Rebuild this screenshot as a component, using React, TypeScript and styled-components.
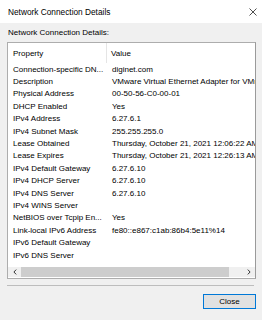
import React from "react";
import styled, { createGlobalStyle } from "styled-components";

const Global = createGlobalStyle`
  html, body { margin: 0; padding: 0; }
  body {
    width: 262px;
    height: 320px;
    overflow: hidden;
    background: #f0f0f0;
    font-family: "Liberation Sans", Arial, sans-serif;
    color: #000;
  }
`;

const Window = styled.div`
  width: 262px;
  height: 320px;
  display: flex;
  flex-direction: column;
  background: #f0f0f0;
`;

const TitleBar = styled.div`
  height: 23px;
  background: #ffffff;
  display: flex;
  align-items: center;
  justify-content: space-between;
  padding: 0 5px 0 8px;
  font-size: 8.3px;
  flex: none;
`;

const CloseX = styled.svg`
  width: 8px;
  height: 8px;
  margin-top: 1px;
`;

const Body = styled.div`
  display: flex;
  flex-direction: column;
  padding: 4px 6px 0 7px;
`;

const Label = styled.div`
  font-size: 8px;
  line-height: 12px;
  padding-left: 1px;
`;

const ListBox = styled.div`
  margin-top: 3px;
  height: 235px;
  border: 1px solid #adadad;
  border-right-color: #9a9a9a;
  background: #ffffff;
  display: flex;
  flex-direction: column;
  overflow: hidden;
`;

const HeaderRow = styled.div`
  height: 20px;
  display: flex;
  flex: none;
  font-size: 8px;
`;

const HeaderCell = styled.div<{ $w?: number }>`
  ${(p) => (p.$w ? `width: ${p.$w}px; flex: none;` : "flex: 1;")}
  display: flex;
  align-items: center;
  padding-left: ${(p) => (p.$w ? 5 : 4)}px;
  padding-top: 1px;
  box-sizing: border-box;
  border-right: ${(p) => (p.$w ? "1px solid #e5e5e5" : "none")};
`;

const Rows = styled.div`
  flex: 1;
  display: flex;
  flex-direction: column;
`;

const Row = styled.div`
  height: 12.4px;
  display: flex;
  align-items: center;
  font-size: 8px;
  white-space: nowrap;
`;

const PropCell = styled.div`
  width: 99px;
  flex: none;
  padding-left: 5px;
  box-sizing: border-box;
  overflow: hidden;
`;

const ValueCell = styled.div`
  flex: 1;
  padding-left: 5px;
  overflow: hidden;
`;

const HScroll = styled.div`
  height: 10px;
  flex: none;
  display: flex;
  background: #f0f0f0;
  margin-bottom: 1px;
`;

const ScrollBtn = styled.div`
  width: 13px;
  flex: none;
  display: flex;
  align-items: center;
  justify-content: center;
`;

const Thumb = styled.div`
  background: #cdcdcd;
  flex: none;
`;

const Track = styled.div`
  flex: 1;
`;

const Separator = styled.div`
  margin-top: 6px;
  height: 1px;
  background: #bdbdbd;
  margin-right: 2px;
`;

const Footer = styled.div`
  display: flex;
  justify-content: flex-end;
  margin-top: 8px;
`;

const Button = styled.button`
  width: 53px;
  height: 15px;
  border: 1px solid #0078d7;
  background: #e1e1e1;
  font-family: "Liberation Sans", Arial, sans-serif;
  font-size: 8px;
  color: #000;
  padding: 0;
  margin: 0;
  display: flex;
  align-items: center;
  justify-content: center;
`;

const rows: [string, string][] = [
  ["Connection-specific DN...", "diginet.com"],
  ["Description", "VMware Virtual Ethernet Adapter for VMnet8"],
  ["Physical Address", "00-50-56-C0-00-01"],
  ["DHCP Enabled", "Yes"],
  ["IPv4 Address", "6.27.6.1"],
  ["IPv4 Subnet Mask", "255.255.255.0"],
  ["Lease Obtained", "Thursday, October 21, 2021 12:06:22 AM"],
  ["Lease Expires", "Thursday, October 21, 2021 12:26:13 AM"],
  ["IPv4 Default Gateway", "6.27.6.10"],
  ["IPv4 DHCP Server", "6.27.6.10"],
  ["IPv4 DNS Server", "6.27.6.10"],
  ["IPv4 WINS Server", ""],
  ["NetBIOS over Tcpip En...", "Yes"],
  ["Link-local IPv6 Address", "fe80::e867:c1ab:86b4:5e11%14"],
  ["IPv6 Default Gateway", ""],
  ["IPv6 DNS Server", ""],
];

export default function App() {
  return (
    <>
      <Global />
      <Window>
        <TitleBar>
          <span>Network Connection Details</span>
          <CloseX viewBox="0 0 8 8">
            <path d="M0.5 0.5 L7.5 7.5 M7.5 0.5 L0.5 7.5" stroke="#222" strokeWidth="0.8" fill="none" />
          </CloseX>
        </TitleBar>
        <Body>
          <Label>Network Connection Details:</Label>
          <ListBox>
            <HeaderRow>
              <HeaderCell $w={99}>Property</HeaderCell>
              <HeaderCell>Value</HeaderCell>
            </HeaderRow>
            <Rows>
              {rows.map(([p, v]) => (
                <Row key={p}>
                  <PropCell>{p}</PropCell>
                  <ValueCell>{v}</ValueCell>
                </Row>
              ))}
            </Rows>
            <HScroll>
              <ScrollBtn>
                <svg width="4" height="6" viewBox="0 0 4 6">
                  <path d="M3.2 0.6 L0.9 3 L3.2 5.4" stroke="#333" strokeWidth="1" fill="none" />
                </svg>
              </ScrollBtn>
              <Thumb style={{ width: 208 }} />
              <Track />
              <ScrollBtn>
                <svg width="4" height="6" viewBox="0 0 4 6">
                  <path d="M0.8 0.6 L3.1 3 L0.8 5.4" stroke="#333" strokeWidth="1" fill="none" />
                </svg>
              </ScrollBtn>
            </HScroll>
          </ListBox>
          <Separator />
          <Footer>
            <Button>Close</Button>
          </Footer>
        </Body>
      </Window>
    </>
  );
}
